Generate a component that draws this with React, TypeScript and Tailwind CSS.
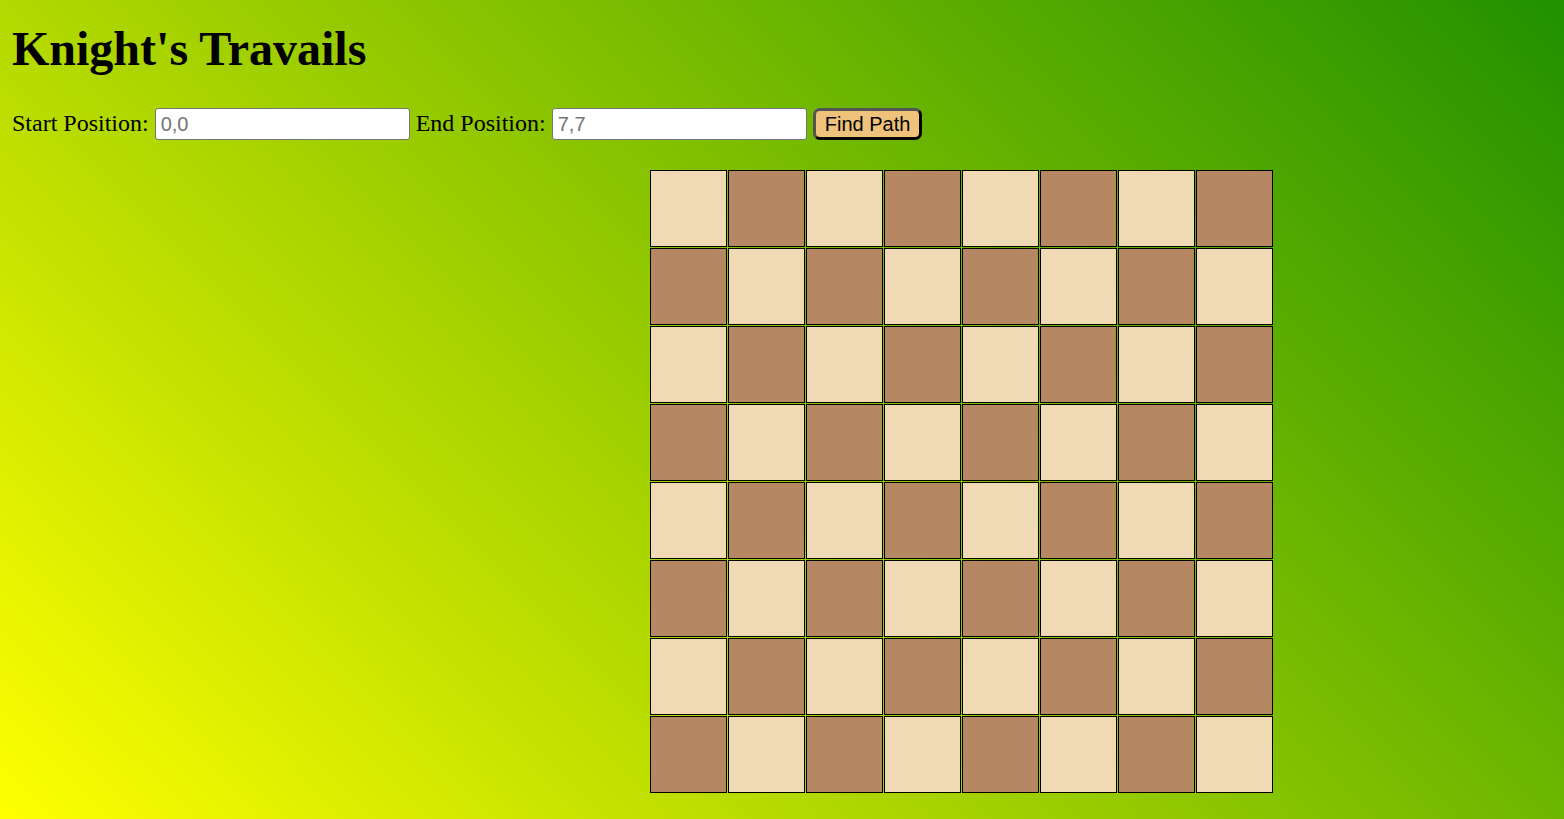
import { useState, type FormEvent } from "react";

type Cell = [number, number];

const SIZE = 8;
const MOVES: Cell[] = [
  [1, 2],
  [2, 1],
  [2, -1],
  [1, -2],
  [-1, -2],
  [-2, -1],
  [-2, 1],
  [-1, 2],
];

function parseCell(text: string): Cell | null {
  const match = /^\s*([0-7])\s*,\s*([0-7])\s*$/.exec(text);
  return match ? [Number(match[1]), Number(match[2])] : null;
}

// Breadth-first search over knight moves.
function findPath(start: Cell, end: Cell): Cell[] {
  const queue: Cell[][] = [[start]];
  const seen = new Set([start.join()]);
  while (queue.length > 0) {
    const path = queue.shift()!;
    const [row, col] = path[path.length - 1];
    if (row === end[0] && col === end[1]) return path;
    for (const [dr, dc] of MOVES) {
      const next: Cell = [row + dr, col + dc];
      const inside = next.every((n) => n >= 0 && n < SIZE);
      if (inside && !seen.has(next.join())) {
        seen.add(next.join());
        queue.push([...path, next]);
      }
    }
  }
  return [];
}

interface PositionFieldProps {
  id: string;
  label: string;
  placeholder: string;
  value: string;
  onChange: (value: string) => void;
}

function PositionField({ id, label, placeholder, value, onChange }: PositionFieldProps) {
  return (
    <div className="flex items-start gap-1.5">
      <label htmlFor={id} className="leading-[30px]">
        {label}
      </label>
      <input
        id={id}
        type="text"
        placeholder={placeholder}
        value={value}
        onChange={(event) => onChange(event.target.value)}
        className="h-8 w-[255px] rounded-[3px] border border-[#767676] bg-white px-[5px] font-['Liberation_Sans',Arial,sans-serif] text-[20px] leading-6 text-black placeholder:text-[#757575]"
      />
    </div>
  );
}

function Board({ path }: { path: Cell[] }) {
  const steps = new Map(path.map((cell, index) => [cell.join(), index]));
  const cells = Array.from({ length: SIZE * SIZE }, (_, i): Cell => [Math.floor(i / SIZE), i % SIZE]);
  return (
    <div className="grid grid-cols-[repeat(8,77px)] gap-px">
      {cells.map(([row, col]) => (
        <div
          key={`${row},${col}`}
          className={`flex h-[77px] items-center justify-center border border-black ${
            (row + col) % 2 === 0 ? "bg-[#f0d9b5]" : "bg-[#b58863]"
          }`}
        >
          {steps.get(`${row},${col}`)}
        </div>
      ))}
    </div>
  );
}

export default function App() {
  const [start, setStart] = useState("");
  const [end, setEnd] = useState("");
  const [path, setPath] = useState<Cell[]>([]);

  function handleSubmit(event: FormEvent) {
    event.preventDefault();
    const from = parseCell(start);
    const to = parseCell(end);
    setPath(from && to ? findPath(from, to) : []);
  }

  return (
    <main className="min-h-screen bg-[linear-gradient(45deg,#ffff00,#219000)] px-3 pt-[22px] pb-6 font-['Liberation_Serif','Times_New_Roman',serif] text-2xl text-black">
      <h1 className="text-5xl leading-[54px] font-bold">Knight's Travails</h1>
      <form onSubmit={handleSubmit} className="mt-8 flex flex-wrap items-center gap-1.5">
        <PositionField id="start" label="Start Position:" placeholder="0,0" value={start} onChange={setStart} />
        <PositionField id="end" label="End Position:" placeholder="7,7" value={end} onChange={setEnd} />
        <button
          type="submit"
          className="h-8 rounded-[7px] border-3 border-black bg-[#efc27b] px-[9px] font-['Liberation_Sans',Arial,sans-serif] text-[20px] leading-6 [border-style:outset]"
        >
          Find Path
        </button>
      </form>
      <div className="mt-[30px] flex justify-center pl-[359px]">
        <Board path={path} />
      </div>
    </main>
  );
}
